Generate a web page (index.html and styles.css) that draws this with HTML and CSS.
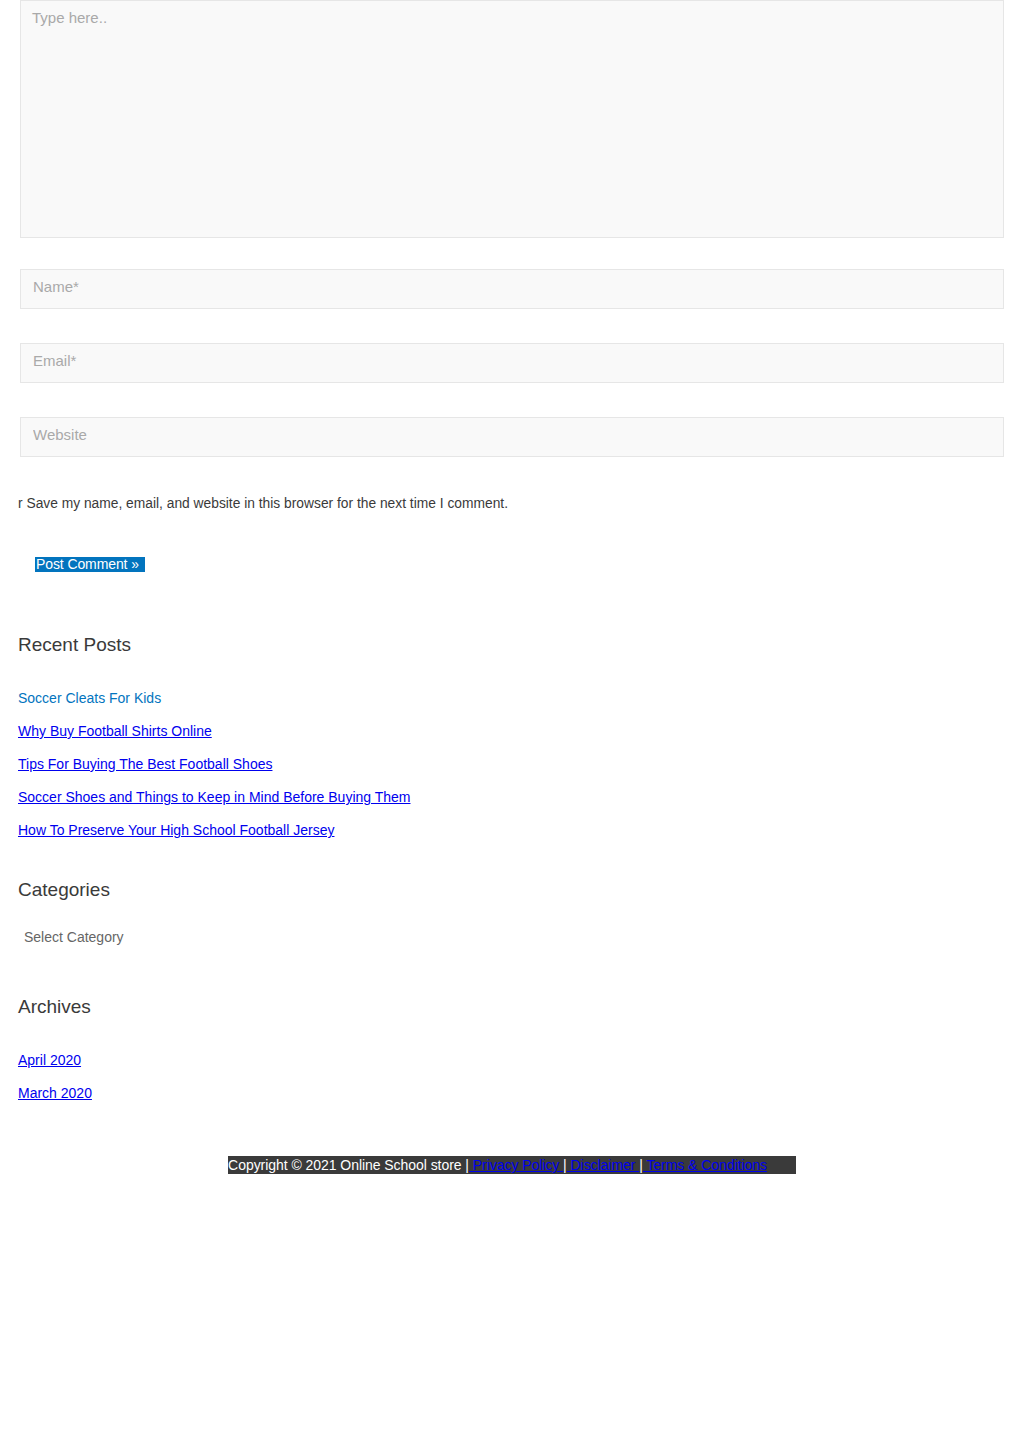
FILE: index.html
```
<!DOCTYPE html>
<html>
  <head>
    <title>Leave a Reply</title>
    <link rel="stylesheet" href="styles.css">
  </head>
  <body>
    <div class="page">
      <form class="comment-form" onsubmit="return false;">
        <textarea class="field comment-box" placeholder="Type here.."></textarea>
        <input class="field" type="text" placeholder="Name*" />
        <input class="field" type="email" placeholder="Email*" />
        <input class="field" type="text" placeholder="Website" />
        <p class="consent">r Save my name, email, and website in this browser for the next time I comment.</p>
        <div class="submit-row">
          <span class="submit-btn">Post Comment &raquo;</span>
        </div>
      </form>

      <div class="widget recent">
        <h2>Recent Posts</h2>
        <ul class="links">
          <li><a class="current" href="#">Soccer Cleats For Kids</a></li>
          <li><a href="#">Why Buy Football Shirts Online</a></li>
          <li><a href="#">Tips For Buying The Best Football Shoes</a></li>
          <li><a href="#">Soccer Shoes and Things to Keep in Mind Before Buying Them</a></li>
          <li><a href="#">How To Preserve Your High School Football Jersey</a></li>
        </ul>
      </div>

      <div class="widget categories">
        <h2>Categories</h2>
        <div class="select">Select Category</div>
      </div>

      <div class="widget archives">
        <h2>Archives</h2>
        <ul class="links">
          <li><a href="#">April 2020</a></li>
          <li><a href="#">March 2020</a></li>
        </ul>
      </div>
    </div>

    <div class="footer">
      <span class="footer-bar">Copyright &copy; 2021 Online School store |<a href="#"> Privacy Policy </a>|<a href="#"> Disclaimer </a>|<a href="#"> Terms &amp; Conditions</a></span>
    </div>
  </body>
</html>
```

FILE: styles.css
```
body {
  margin: 0;
  font-family: "Liberation Sans", Arial, sans-serif;
  color: #3a3a3a;
  background: #fff;
}

.page {
  padding: 0 20px 0 18px;
}

.comment-form {
  margin: 0;
}

.field {
  display: block;
  box-sizing: border-box;
  width: 984px;
  margin: 0 0 34px 2px;
  height: 40px;
  padding: 0 12px 5px 12px;
  border: 1px solid #e6e6e6;
  background: #f9f9f9;
  font-family: "Liberation Sans", Arial, sans-serif;
  font-size: 15px;
  color: #666;
}
.field::placeholder {
  color: #a9a9a9;
}
.comment-box {
  height: 238px;
  margin-bottom: 31px;
  padding: 8px 11px;
  resize: none;
}

.consent {
  margin: 0;
  padding-top: 5px;
  font-size: 13.8px;
  color: #3a3a3a;
}

.submit-row {
  margin: 44px 0 0 17px;
}
.submit-btn {
  display: inline-block;
  background: #0274be;
  color: #fff;
  font-size: 14px;
  line-height: 15px;
  padding: 0 6px 0 1px;
  letter-spacing: -0.1px;
}

.widget h2 {
  margin: 0;
  font-size: 19px;
  font-weight: normal;
  color: #3a3a3a;
}
.recent {
  margin-top: 61px;
}
.categories {
  margin-top: 40px;
}
.archives {
  margin-top: 51px;
}

.links {
  list-style: none;
  margin: 34px 0 0 0;
  padding: 0;
}
.links li {
  font-size: 14px;
  line-height: 17px;
  margin-bottom: 16px;
}
.links a {
  color: #0000ee;
}
.links a.current {
  color: #0274be;
  text-decoration: none;
}
.archives .links li:last-child {
  margin-bottom: 0;
}

.select {
  margin: 28px 0 0 6px;
  font-size: 14px;
  color: #666;
}

.footer {
  margin-top: 54px;
  text-align: center;
}
.footer-bar {
  display: inline-block;
  background: #3a3a3a;
  color: #fff;
  font-size: 14px;
  line-height: 18px;
  padding-right: 29px;
  letter-spacing: -0.05px;
}
.footer-bar a {
  color: #0000ee;
}
```
